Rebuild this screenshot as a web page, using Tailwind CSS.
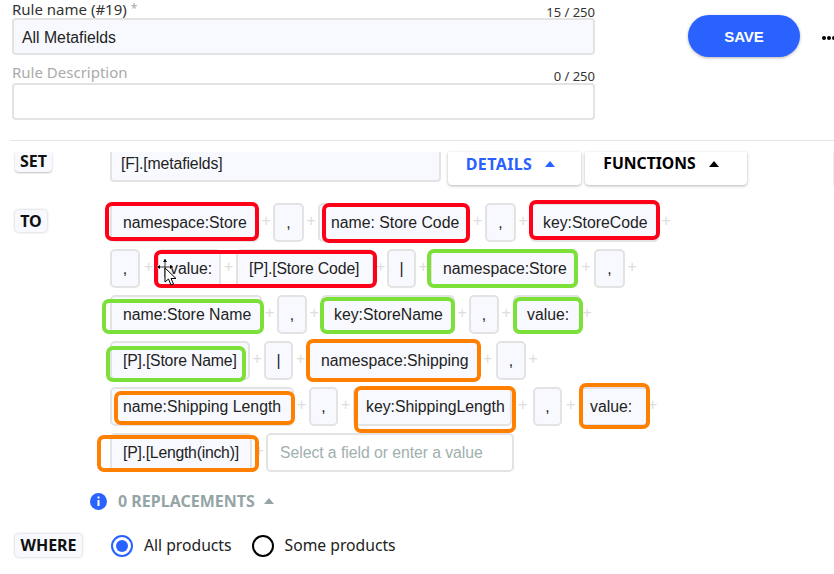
<!DOCTYPE html>
<html lang="en">
<head>
    <meta charset="UTF-8">
    <script src="https://cdn.jsdelivr.net/npm/@tailwindcss/browser@4"></script>
    <title>Rule editor</title>
</head>
<body class="bg-white">
<div class="relative w-[834px] h-[574px] overflow-hidden bg-white font-['Noto_Sans',sans-serif] text-[#111]">

    <!-- rule name and description -->
    <div class="flex">
        <div class="ml-[12px] w-[583px] shrink-0">
            <div class="flex justify-between h-[18px]">
                <span class="text-[15px] leading-[18px] text-[#333]">Rule name (#19) <span class="text-[#aaa] text-[12px] align-top">*</span></span>
                <span class="text-[13px] leading-[24px] text-[#333]">15 / 250</span>
            </div>
            <div class="h-[37px] pl-[8px] bg-[#f8f9fe] border-2 border-[#e3e3e3] rounded-[4px] font-['Liberation_Sans',sans-serif] text-[15.8px] leading-[35px] text-[#222]">All Metafields</div>
            <div class="flex justify-between h-[28px] items-end">
                <span class="text-[15px] leading-[24px] mb-[-1px] text-[#aaa]">Rule Description</span>
                <span class="text-[13px] leading-[14px] text-[#333]">0 / 250</span>
            </div>
            <div class="h-[37px] bg-white border-2 border-[#e3e3e3] rounded-[4px]"></div>
        </div>
        <div class="ml-[93px] mt-[15px] w-[112px] h-[42px] shrink-0 rounded-full bg-[#2962ff] shadow-[0_1px_3px_rgba(0,0,0,0.3)] text-center text-white font-['Liberation_Sans',sans-serif] font-bold text-[15px] leading-[43px]">SAVE</div>
        <div class="ml-[22px] mt-[36px] flex shrink-0 gap-[1px] h-[5px]">
            <span class="w-[4px] h-[4px] rounded-full bg-black"></span>
            <span class="w-[4px] h-[4px] rounded-full bg-black"></span>
            <span class="w-[4px] h-[4px] rounded-full bg-black"></span>
        </div>
    </div>

    <div class="ml-[10px] mt-[20px] h-[1px] bg-[#e6e6ea]"></div>

    <!-- SET row, its top is cut off by the scroll area -->
    <div class="flex mt-[11px] h-[34px] border-r border-[#eee]">
        <div class="ml-[15px] w-[37px] h-[20px] bg-[#f8f9fe] rounded-b-[4px] shadow-[0_1px_2px_rgba(0,0,0,0.25)] text-center font-bold text-[16px] leading-[19px]">SET</div>
        <div class="ml-[58px] w-[331px] h-[30px] pl-[9px] bg-[#f8f9fe] border-x-2 border-b-2 border-[#e3e3e3] rounded-b-[4px] font-['Liberation_Sans',sans-serif] text-[15.8px] tracking-[-0.13px] leading-[23px] text-[#222]">[F].[metafields]</div>
        <div class="ml-[7px] w-[133px] h-[33px] pb-[9px] pr-[8px] flex items-center justify-center gap-[13px] rounded-b-[4px] shadow-[0_1px_3px_rgba(0,0,0,0.3)] font-bold text-[16px] tracking-[0.4px] text-[#2962ff]">
            DETAILS
            <svg width="10" height="6" viewBox="0 0 10 6"><path d="M5 0L10 6H0Z" fill="#2962ff"/></svg>
        </div>
        <div class="ml-[4px] w-[162px] h-[33px] pb-[9px] pr-[10px] flex items-center justify-center gap-[13px] rounded-b-[4px] shadow-[0_1px_3px_rgba(0,0,0,0.3)] font-bold text-[15.7px] text-black">
            FUNCTIONS
            <svg width="10" height="6" viewBox="0 0 10 6"><path d="M5 0L10 6H0Z" fill="#000"/></svg>
        </div>
    </div>

    <!-- TO section -->
    <div class="flex mt-[17px] h-[276px] font-['Liberation_Sans',sans-serif] text-[15.8px] text-[#222]">
        <div class="ml-[15px] mt-[7px] w-[32px] h-[22px] bg-[#f8f9fe] rounded-[4px] shadow-[0_0_3px_rgba(0,0,0,0.25)] text-center font-['Noto_Sans',sans-serif] font-bold text-[16px] leading-[22px] text-[#111]">TO</div>
        <div class="ml-[63px] leading-[35px]">

            <div class="flex h-[46px]">
                <div class="relative w-[149px] h-[39px] pl-[11px] bg-[#f8f9fe] border-2 border-[#e3e3e3] rounded-[5px]">namespace:Store
                    <span class="absolute -left-[7px] -top-[3px] w-[154px] h-[39px] border-[4px] border-[#ff0019] rounded-[7px]"></span></div>
                <span class="w-[14px] text-center text-[#ddd]">+</span>
                <div class="w-[31px] h-[39px] text-center bg-[#f8f9fe] border-2 border-[#e3e3e3] rounded-[5px]">,</div>
                <span class="w-[14px] text-center text-[#ddd]">+</span>
                <div class="relative w-[152px] h-[39px] pl-[11px] bg-[#f8f9fe] border-2 border-[#e3e3e3] rounded-[5px]">name: Store Code
                    <span class="absolute left-[2px] -top-[2px] w-[148px] h-[40px] border-[4px] border-[#ff0019] rounded-[7px]"></span></div>
                <span class="w-[15px] text-center text-[#ddd]">+</span>
                <div class="w-[31px] h-[39px] text-center bg-[#f8f9fe] border-2 border-[#e3e3e3] rounded-[5px]">,</div>
                <span class="w-[14px] text-center text-[#ddd]">+</span>
                <div class="relative w-[129px] h-[39px] pl-[11px] bg-[#f8f9fe] border-2 border-[#e3e3e3] rounded-[5px]">key:StoreCode
                    <span class="absolute -left-[3px] -top-[5px] w-[131px] h-[40px] border-[4px] border-[#ff0019] rounded-[7px]"></span></div>
                <span class="w-[14px] text-center text-[#ddd]">+</span>
            </div>

            <div class="flex h-[46px]">
                <div class="w-[30px] h-[39px] text-center bg-[#f8f9fe] border-2 border-[#e3e3e3] rounded-[5px]">,</div>
                <span class="w-[17px] text-center text-[#ddd]">+</span>
                <div class="relative w-[64px] h-[39px] pl-[11px] bg-[#f8f9fe] border-2 border-[#e3e3e3] rounded-[5px]">value:
                    <span class="absolute -left-[5px] -top-[1px] w-[223px] h-[38px] border-[4px] border-[#ff0019] rounded-[7px]"></span></div>
                <span class="w-[15px] text-center text-[#ddd]">+</span>
                <div class="w-[138px] h-[39px] pl-[11px] bg-[#f8f9fe] border-2 border-[#e3e3e3] rounded-[5px] tracking-[-0.13px]">[P].[Store Code]</div>
                <span class="w-[13px] text-center text-[#ddd]">+</span>
                <div class="w-[29px] h-[39px] text-center bg-[#f8f9fe] border-2 border-[#e3e3e3] rounded-[5px]">|</div>
                <span class="w-[14px] text-center text-[#ddd]">+</span>
                <div class="relative w-[148px] h-[39px] pl-[11px] bg-[#f8f9fe] border-2 border-[#e3e3e3] rounded-[5px]">namespace:Store
                    <span class="absolute -left-[5px] -top-[2px] w-[151px] h-[39px] border-[4px] border-[#7be037] rounded-[7px]"></span></div>
                <span class="w-[16px] text-center text-[#ddd]">+</span>
                <div class="w-[31px] h-[39px] text-center bg-[#f8f9fe] border-2 border-[#e3e3e3] rounded-[5px]">,</div>
                <span class="w-[14px] text-center text-[#ddd]">+</span>
            </div>

            <div class="flex h-[46px]">
                <div class="relative w-[152px] h-[39px] pl-[11px] bg-[#f8f9fe] border-2 border-[#e3e3e3] rounded-[5px]">name:Store Name
                    <span class="absolute -left-[10px] top-[2px] w-[162px] h-[35px] border-[4px] border-[#7be037] rounded-[7px]"></span></div>
                <span class="w-[15px] text-center text-[#ddd]">+</span>
                <div class="w-[30px] h-[39px] text-center bg-[#f8f9fe] border-2 border-[#e3e3e3] rounded-[5px]">,</div>
                <span class="w-[14px] text-center text-[#ddd]">+</span>
                <div class="relative w-[134px] h-[39px] pl-[11px] bg-[#f8f9fe] border-2 border-[#e3e3e3] rounded-[5px]">key:StoreName
                    <span class="absolute -left-[3px] top-0 w-[135px] h-[37px] border-[4px] border-[#7be037] rounded-[7px]"></span></div>
                <span class="w-[14px] text-center text-[#ddd]">+</span>
                <div class="w-[30px] h-[39px] text-center bg-[#f8f9fe] border-2 border-[#e3e3e3] rounded-[5px]">,</div>
                <span class="w-[14px] text-center text-[#ddd]">+</span>
                <div class="relative w-[68px] h-[39px] pl-[12px] bg-[#f8f9fe] border-2 border-[#e3e3e3] rounded-[5px]">value:
                    <span class="absolute -left-[2px] top-0 w-[70px] h-[37px] border-[4px] border-[#7be037] rounded-[7px]"></span></div>
                <span class="w-[12px] text-center text-[#ddd]">+</span>
            </div>

            <div class="flex h-[46px]">
                <div class="relative w-[140px] h-[39px] pl-[11px] bg-[#f8f9fe] border-2 border-[#e3e3e3] rounded-[5px] tracking-[-0.2px]">[P].[Store Name]
                    <span class="absolute -left-[6px] top-[3px] w-[140px] h-[36px] border-[4px] border-[#7be037] rounded-[7px]"></span></div>
                <span class="w-[14px] text-center text-[#ddd]">+</span>
                <div class="w-[29px] h-[39px] text-center bg-[#f8f9fe] border-2 border-[#e3e3e3] rounded-[5px]">|</div>
                <span class="w-[15px] text-center text-[#ddd]">+</span>
                <div class="relative w-[171px] h-[39px] pl-[11px] bg-[#f8f9fe] border-2 border-[#e3e3e3] rounded-[5px]">namespace:Shipping
                    <span class="absolute -left-[4px] -top-[4px] w-[175px] h-[43px] border-[4px] border-[#ff8000] rounded-[7px]"></span></div>
                <span class="w-[17px] text-center text-[#ddd]">+</span>
                <div class="w-[30px] h-[39px] text-center bg-[#f8f9fe] border-2 border-[#e3e3e3] rounded-[5px]">,</div>
                <span class="w-[14px] text-center text-[#ddd]">+</span>
            </div>

            <div class="flex h-[46px]">
                <div class="relative w-[184px] h-[39px] pl-[11px] bg-[#f8f9fe] border-2 border-[#e3e3e3] rounded-[5px]">name:Shipping Length
                    <span class="absolute left-[2px] top-[2px] w-[181px] h-[34px] border-[4px] border-[#ff8000] rounded-[7px]"></span></div>
                <span class="w-[15px] text-center text-[#ddd]">+</span>
                <div class="w-[29px] h-[39px] text-center bg-[#f8f9fe] border-2 border-[#e3e3e3] rounded-[5px]">,</div>
                <span class="w-[15px] text-center text-[#ddd]">+</span>
                <div class="relative w-[159px] h-[39px] pl-[11px] bg-[#f8f9fe] border-2 border-[#e3e3e3] rounded-[5px]">key:ShippingLength
                    <span class="absolute -left-[1px] -top-[3px] w-[162px] h-[47px] border-[4px] border-[#ff8000] rounded-[7px]"></span></div>
                <span class="w-[21px] text-center text-[#ddd]">+</span>
                <div class="w-[29px] h-[39px] text-center bg-[#f8f9fe] border-2 border-[#e3e3e3] rounded-[5px]">,</div>
                <span class="w-[17px] text-center text-[#ddd]">+</span>
                <div class="relative w-[69px] h-[39px] pl-[9px] bg-[#f8f9fe] border-2 border-[#e3e3e3] rounded-[5px]">value:
                    <span class="absolute -left-[2px] -top-[6px] w-[71px] h-[46px] border-[4px] border-[#ff8000] rounded-[7px]"></span></div>
                <span class="w-[6px] text-center text-[#ddd]">+</span>
            </div>

            <div class="flex h-[46px]">
                <div class="relative w-[142px] h-[39px] pl-[11px] bg-[#f8f9fe] border-2 border-[#e3e3e3] rounded-[5px] tracking-[-0.25px]">[P].[Length(inch)]
                    <span class="absolute -left-[15px] top-0 w-[162px] h-[37px] border-[4px] border-[#ff8000] rounded-[7px]"></span></div>
                <span class="w-[14px] text-center text-[#ddd]">+</span>
                <div class="w-[248px] h-[39px] pl-[12px] bg-white border-2 border-[#e3e3e3] rounded-[5px] tracking-[-0.06px] text-[#9fb0ae]">Select a field or enter a value</div>
            </div>
        </div>
    </div>

    <!-- replacements count -->
    <div class="flex items-center mt-[13px] ml-[90px] h-[18px]">
        <svg width="17" height="17" viewBox="0 0 17 17">
            <circle cx="8.5" cy="8.5" r="8.5" fill="#2962ff"/>
            <rect x="7.5" y="3.5" width="2" height="2" fill="#fff"/>
            <rect x="7.5" y="7" width="2" height="6" fill="#fff"/>
        </svg>
        <span class="ml-[11px] font-bold text-[16px] text-[#95a5a6]">0 REPLACEMENTS</span>
        <svg class="ml-[9px]" width="10" height="6" viewBox="0 0 10 6"><path d="M5 0L10 6H0Z" fill="#95a5a6"/></svg>
    </div>

    <!-- WHERE row -->
    <div class="flex items-center mt-[24px] h-[23px]">
        <div class="ml-[15px] w-[67px] h-[23px] bg-[#f8f9fe] rounded-[4px] shadow-[0_0_3px_rgba(0,0,0,0.25)] text-center font-bold text-[16px] leading-[23px]">WHERE</div>
        <span class="ml-[29px] w-[22px] h-[22px] rounded-full border-2 border-[#2962ff] flex items-center justify-center">
            <span class="w-[12px] h-[12px] rounded-full bg-[#2962ff]"></span>
        </span>
        <span class="ml-[11px] text-[15.7px] text-[#222]">All products</span>
        <span class="ml-[20px] w-[22px] h-[22px] rounded-full border-2 border-black"></span>
        <span class="ml-[11px] text-[15.7px] text-[#222]">Some products</span>
    </div>

    <!-- mouse cursor in the capture -->
    <svg class="absolute left-[156px] top-[258px]" width="22" height="30" viewBox="0 0 22 30">
        <path d="M9 1V19M1 9H17" fill="none" stroke="#fff" stroke-width="2.5"/>
        <path d="M9 1V19M1 9H17" fill="none" stroke="#000" stroke-width="0.8"/>
        <path d="M9 1L7 4H11ZM1 9L4 7V11ZM17 9L14 7V11Z" fill="#000"/>
        <path d="M9 10V24L12.5 21L15 27L17.5 26L15 20.5H20Z" fill="#fff" stroke="#000" stroke-width="1"/>
    </svg>
</div>
</body>
</html>
